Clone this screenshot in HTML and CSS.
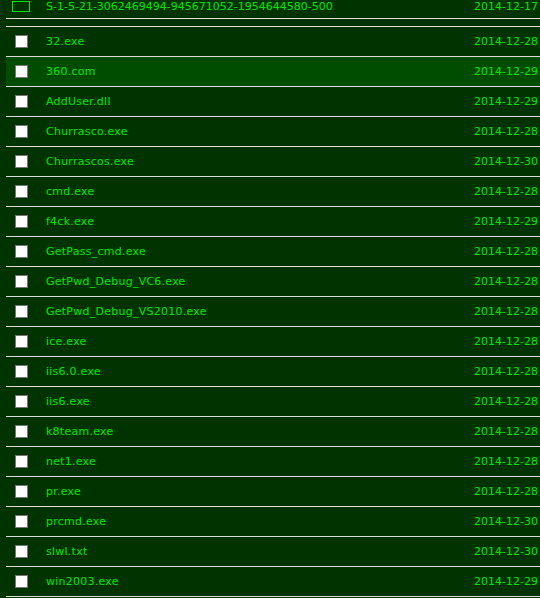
FILE: index.html
```html
<!DOCTYPE html>
<html lang="en">
<head>
    <meta charset="UTF-8">
    <title>Files</title>
    <link rel="stylesheet" href="styles.css">
</head>
<body>
    <div class="browser">
        <div class="row folder">
            <span class="folder-icon"></span>
            <span class="name">S-1-5-21-3062469494-945671052-1954644580-500</span>
            <span class="date">2014-12-17</span>
        </div>
        <div class="file-list">
            <div class="row"><span class="check"></span><span class="name">32.exe</span><span class="date">2014-12-28</span></div>
            <div class="row active"><span class="check"></span><span class="name">360.com</span><span class="date">2014-12-29</span></div>
            <div class="row"><span class="check"></span><span class="name">AddUser.dll</span><span class="date">2014-12-29</span></div>
            <div class="row"><span class="check"></span><span class="name">Churrasco.exe</span><span class="date">2014-12-28</span></div>
            <div class="row"><span class="check"></span><span class="name">Churrascos.exe</span><span class="date">2014-12-30</span></div>
            <div class="row"><span class="check"></span><span class="name">cmd.exe</span><span class="date">2014-12-28</span></div>
            <div class="row"><span class="check"></span><span class="name">f4ck.exe</span><span class="date">2014-12-29</span></div>
            <div class="row"><span class="check"></span><span class="name">GetPass_cmd.exe</span><span class="date">2014-12-28</span></div>
            <div class="row"><span class="check"></span><span class="name">GetPwd_Debug_VC6.exe</span><span class="date">2014-12-28</span></div>
            <div class="row"><span class="check"></span><span class="name">GetPwd_Debug_VS2010.exe</span><span class="date">2014-12-28</span></div>
            <div class="row"><span class="check"></span><span class="name">ice.exe</span><span class="date">2014-12-28</span></div>
            <div class="row"><span class="check"></span><span class="name">iis6.0.exe</span><span class="date">2014-12-28</span></div>
            <div class="row"><span class="check"></span><span class="name">iis6.exe</span><span class="date">2014-12-28</span></div>
            <div class="row"><span class="check"></span><span class="name">k8team.exe</span><span class="date">2014-12-28</span></div>
            <div class="row"><span class="check"></span><span class="name">net1.exe</span><span class="date">2014-12-28</span></div>
            <div class="row"><span class="check"></span><span class="name">pr.exe</span><span class="date">2014-12-28</span></div>
            <div class="row"><span class="check"></span><span class="name">prcmd.exe</span><span class="date">2014-12-30</span></div>
            <div class="row"><span class="check"></span><span class="name">slwl.txt</span><span class="date">2014-12-30</span></div>
            <div class="row"><span class="check"></span><span class="name">win2003.exe</span><span class="date">2014-12-29</span></div>
        </div>
    </div>
</body>
</html>
```

FILE: styles.css
```css
body {
    margin: 0;
    background: #003300;
    font-family: "DejaVu Sans", Verdana, sans-serif;
    font-size: 11px;
    color: #00e600;
    overflow: hidden;
}
.browser {
    margin-top: -11px;
    margin-left: 6px;
}
.row {
    display: flex;
    align-items: center;
    height: 29px;
    border-bottom: 1px solid #dddddd;
    padding: 0 2px 0 9px;
}
.row.active {
    background: #004d00;
}
.folder {
    height: 24px;
    padding-top: 5px;
    margin-bottom: 7px;
}
.folder .name {
    letter-spacing: 0;
}
.file-list {
    border-top: 1px solid #dddddd;
}
.folder-icon {
    flex: none;
    width: 16px;
    height: 9px;
    border: 1px solid #00e600;
    margin: 0 16px 0 -3px;
}
.check {
    flex: none;
    width: 11px;
    height: 11px;
    background: #ffffff;
    border: 1px solid #777777;
    margin-right: 18px;
}
.name {
    flex: 1;
    letter-spacing: 0.25px;
}
.date {
    text-align: right;
}
```
